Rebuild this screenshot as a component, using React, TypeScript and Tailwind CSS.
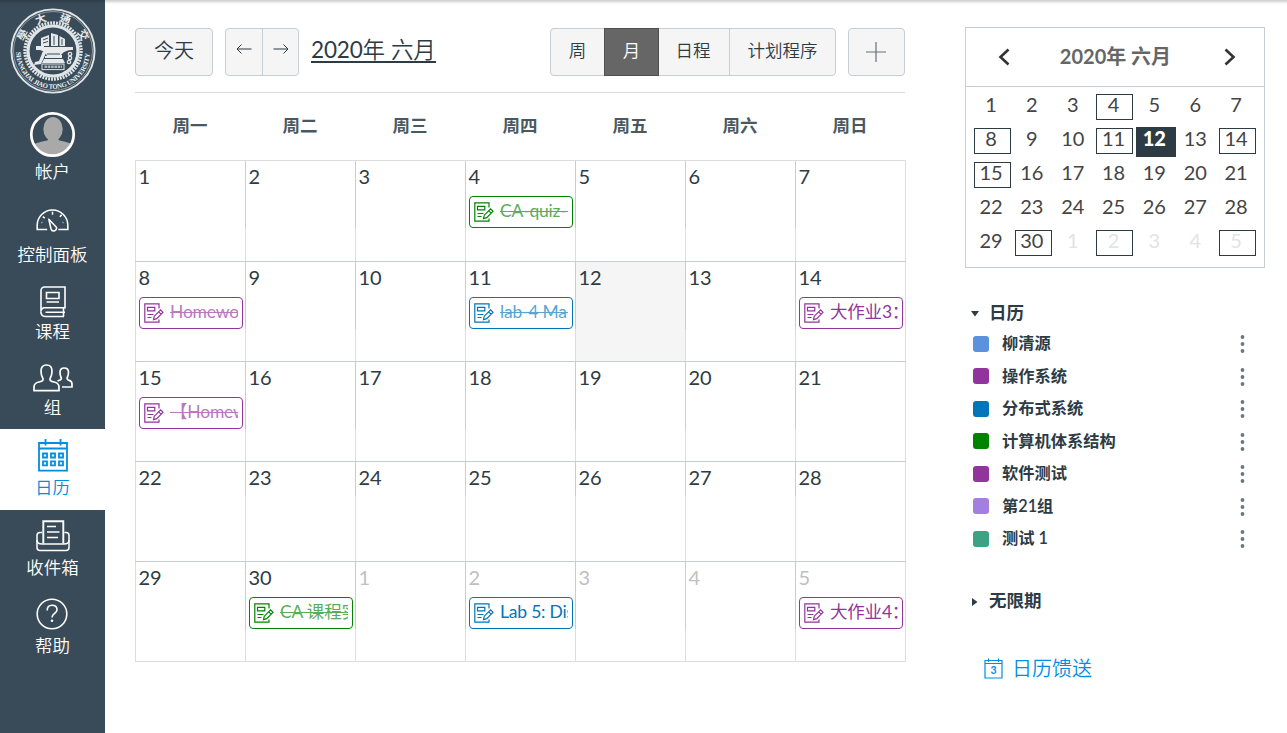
import React from 'react';

type EventItem = { title: string; tone: Tone; done?: boolean };
type Day = { n: number; other?: boolean; today?: boolean; event?: EventItem };
type Tone = 'purple' | 'blue' | 'green';

const toneClass: Record<Tone, string> = {
  purple: 'border-[#91349b] text-[#91349b]',
  blue: 'border-[#0076b8] text-[#0076b8]',
  green: 'border-[#008400] text-[#008400]',
};

const events: Record<number, EventItem> = {
  3: { title: 'CA-quiz-1', tone: 'green', done: true },
  7: { title: 'Homework', tone: 'purple', done: true },
  10: { title: 'lab-4 Map', tone: 'blue', done: true },
  13: { title: '大作业3：', tone: 'purple' },
  14: { title: '【Homework', tone: 'purple', done: true },
  29: { title: 'CA 课程实验', tone: 'green', done: true },
  31: { title: 'Lab 5: Dist', tone: 'blue' },
  34: { title: '大作业4：', tone: 'purple' },
};

const weeks: Day[][] = [0, 1, 2, 3, 4].map((w) =>
  [0, 1, 2, 3, 4, 5, 6].map((d) => {
    const i = w * 7 + d;
    return { n: i < 30 ? i + 1 : i - 29, other: i >= 30, today: i === 11, event: events[i] };
  }),
);

const weekdays = ['周一', '周二', '周三', '周四', '周五', '周六', '周日'];

const calendars = [
  { name: '柳清源', color: 'bg-[#5b92de]' },
  { name: '操作系统', color: 'bg-[#91349b]' },
  { name: '分布式系统', color: 'bg-[#0076b8]' },
  { name: '计算机体系结构', color: 'bg-[#008400]' },
  { name: '软件测试', color: 'bg-[#91349b]' },
  { name: '第21组', color: 'bg-[#a37fdf]' },
  { name: '测试 1', color: 'bg-[#3da284]' },
];

function Seal() {
  return (
    <svg width="86" height="86" viewBox="-43 -43 86 86" fill="none" stroke="#dfe4e7">
      <defs>
        <path id="seal-bottom" d="M-36.800 1A36.800 36.800 0 0 0 36.800 1" />
      </defs>
      <circle r="41.600" strokeWidth="1.900" />
      <circle r="39.500" strokeWidth="1" opacity="0.5" />
      <circle r="28" strokeWidth="3.400" strokeDasharray="1.900 1.030" />
      <circle r="25" strokeWidth="3.200" />
      <text fill="#eef1f2" stroke="none" fontSize="6.800" fontWeight="700" fontFamily="'Liberation Serif', serif">
        <textPath href="#seal-bottom" startOffset="0" textLength="114" lengthAdjust="spacing">SHANGHAI JIAO TONG UNIVERSITY</textPath>
      </text>
      <g fill="#e6eaec" stroke="none" fontSize="11" fontWeight="700" fontFamily="'Noto Sans CJK TC', sans-serif" textAnchor="middle">
        <text transform="rotate(-62) translate(0 -30.300)">學</text>
        <text transform="rotate(-21) translate(0 -30.300)">大</text>
        <text transform="rotate(21) translate(0 -30.300)">通</text>
        <text transform="rotate(62) translate(0 -30.300)">交</text>
      </g>
      <g fill="#e6eaec" stroke="none">
        <path d="M-17-5H-9V-4H20V-1C14-1 10 1 8 4H9V8H-8V5H-6C-7 2-9 0-13 -1H-17Z" />
        <path d="M-12-5V-13L-4-16V-5Z" />
        <path d="M-2-5V-18L5-16V-5Z" />
        <path d="M6.500-5V-15L12-12V-5Z" />
        <path d="M-10 0L-7 2L-12 13L-19 14L-18 11L-14 10Z" />
        <path d="M-9 8H10L12 12H-11Z" />
      </g>
      <path d="M-10-11L-5-13M-10-8L-5-9.500M1-15V-6M9-12V-6M-6 3H7M-8 7.500H9" stroke="#394b58" strokeWidth="1" />
      <g strokeWidth="1.300">
        <circle cx="17" cy="3" r="1.700" />
        <circle cx="17" cy="7" r="1.700" />
        <circle cx="16" cy="11" r="1.700" />
      </g>
      <rect x="-11" y="13" width="22" height="5.600" strokeWidth="1" />
      <path d="M-8.500 15.800H9" strokeWidth="2.600" strokeDasharray="2.600 0.700" opacity="0.7" />
    </svg>
  );
}

function Avatar() {
  return (
    <svg width="46" height="46" viewBox="0 0 46 46">
      <defs>
        <clipPath id="avatar-clip">
          <circle cx="22.500" cy="23.500" r="20.500" />
        </clipPath>
      </defs>
      <g clipPath="url(#avatar-clip)" fill="#a9a9a9">
        <ellipse cx="23" cy="18" rx="9.700" ry="12" />
        <path d="M18 26H28.500V29C34 31 42 31 43 36V46H2V36C4 31 13 31 18 29Z" />
      </g>
      <circle cx="22.500" cy="23.500" r="21.200" fill="none" stroke="#fff" strokeWidth="2.700" />
    </svg>
  );
}

function GaugeIcon() {
  return (
    <svg width="33" height="24" viewBox="0 0 34 24" fill="none" stroke="#fff" strokeWidth="1.600" className="-ml-px">
      <path d="M11.500 21.700H1.200V17.500A15.800 15.800 0 0 1 32.800 17.500V21.700H23" />
      <path d="M17 3.500V6.500M26.500 6.700L24.500 8.700M9 10L7 8.500M5.800 14.500L6.500 14.700M28.200 14.500L27.500 14.700" />
      <path d="M13.200 11.200L21 19.500A2.600 2.600 0 0 1 15.500 21.300Z" strokeLinejoin="round" />
    </svg>
  );
}

function BookIcon() {
  return (
    <svg width="26" height="32" viewBox="0 0 26 32" fill="none" stroke="#fff" strokeWidth="1.600">
      <path d="M23 21.800H4.500A3.500 3.500 0 0 0 1 25.500V4.500A3.500 3.500 0 0 1 4.500 1H25V21.800H23" />
      <path d="M1 25.500A4.300 4.300 0 0 0 5 30.500H24M5.500 26.300H25M23.500 22V30.500" />
      <path d="M6.500 6.500H19V12.500H6.500ZM6.500 16H19" />
    </svg>
  );
}

function GroupIcon() {
  return (
    <svg width="40" height="28" viewBox="0 0 40 28" fill="none" stroke="#fff" strokeWidth="1.700" strokeLinejoin="round">
      <path d="M1 26.700V23C1 18.800 4 18.500 6.800 17.800C10 17 10.600 15.600 9.700 14C8.300 11.500 8 9.500 8 7C8 3 10 1 13.500 1S19 3 19 7C19 9.500 18.700 11.500 17.300 14C16.400 15.600 17 17 20.200 17.800C23 18.500 26 18.800 26 23V26.700Z" />
      <path d="M29 23H39V20C39 16.800 37 16.800 35.300 16C33.700 15.200 34 14 34.500 13C35.200 11.500 35.500 10.500 35.500 8.500C35.500 5.600 34 4 31.200 4S27 5.600 27 8.500C27 10.500 27.200 11.500 27.900 13C28.400 14 28.700 15.200 27 16L24.500 17" />
    </svg>
  );
}

function CalendarIcon() {
  return (
    <svg width="30" height="34" viewBox="0 0 30 34" fill="none" stroke="#008ee2" strokeWidth="1.800">
      <path d="M1 4H29V31.700H1ZM1 9.500H29" />
      <path d="M7.500 0V6.500M22.500 0V6.500" />
      <path d="M5 14.500H9V18.500H5ZM13 14.500H17V18.500H13ZM21 14.500H25V18.500H21ZM5 22.300H9V26.300H5ZM13 22.300H17V26.300H13ZM21 22.300H25V26.300H21Z" />
    </svg>
  );
}

function InboxIcon() {
  return (
    <svg width="34" height="32" viewBox="0 0 34 32" fill="none" stroke="#fff" strokeWidth="1.500">
      <path d="M7.300 23.500V1.200H27.300V23.500" strokeWidth="1.900" />
      <path d="M11 6.500H20M11 12H23.500M11 17.500H22" />
      <path d="M6 12.500H4A3 3 0 0 0 1 15.500V27.500A3 3 0 0 0 4 30.500H30A3 3 0 0 0 33 27.500V15.500A3 3 0 0 0 30 12.500H28.500" />
      <path d="M1 20C1 23 3 24 6 24H28C31 24 33 23 33 20" />
    </svg>
  );
}

function HelpIcon() {
  return (
    <svg width="32" height="32" viewBox="0 0 32 32" fill="none" stroke="#fff" strokeWidth="1.600" className="-ml-[2px]">
      <circle cx="16" cy="16" r="14.800" />
      <path d="M11.200 12.500C11.200 9 13 7.300 16 7.300S21 9 21 11.800C21 15.500 16 15.500 16 19.500" />
      <circle cx="16" cy="22.800" r="1.300" fill="#fff" stroke="none" />
    </svg>
  );
}

function AssignmentIcon() {
  return (
    <svg width="20" height="20" viewBox="0 0 20 20" fill="none" stroke="currentColor" strokeWidth="1.200" className="shrink-0">
      <path d="M15 5.500V0.800H0.800V19.200H15V16.500" />
      <path d="M3.500 4.300H10.800V7.800H3.500ZM3.500 11.500H9.500M3.500 14.500H7.500" />
      <path d="M9.500 16.600L10.300 13.200L16.600 6.900L19 9.300L12.700 15.700ZM14.700 8.800L17.100 11.200" />
    </svg>
  );
}

function NavItem({ label, box, active, children }: { label: string; box: string; active?: boolean; children: React.ReactNode }) {
  return (
    <a className={`flex flex-col items-center justify-between ${box} ${active ? 'bg-white text-[#008ee2]' : 'text-white'}`}>
      {children}
      <span className="block h-6 pt-px text-[17.5px] leading-6 whitespace-nowrap">{label}</span>
    </a>
  );
}

function Sidebar() {
  return (
    <nav className="flex h-[733px] w-[105px] shrink-0 flex-col bg-[#394b58] font-[350]">
      <div className="flex h-[111px] justify-center pt-2">
        <Seal />
      </div>
      <NavItem label="帐户" box="h-[72px]"><Avatar /></NavItem>
      <NavItem label="控制面板" box="mt-[25px] h-[58px]"><GaugeIcon /></NavItem>
      <NavItem label="课程" box="mt-[20px] h-[57px]"><BookIcon /></NavItem>
      <NavItem label="组" box="mt-[21px] h-[55px]"><GroupIcon /></NavItem>
      <NavItem label="日历" box="mt-[10px] h-[81px] pt-[10px] pb-[11px]" active><CalendarIcon /></NavItem>
      <NavItem label="收件箱" box="mt-[10px] h-[59px]"><InboxIcon /></NavItem>
      <NavItem label="帮助" box="mt-[19px] h-[59px]"><HelpIcon /></NavItem>
    </nav>
  );
}

function Toolbar() {
  return (
    <div className="flex h-[65px] items-start border-b border-[#d9dcde] font-[350] text-[#2d3b45]">
      <button className="h-12 w-[78px] rounded border border-[#c7cdd1] bg-[#f5f5f5] pb-1 text-xl leading-6">今天</button>
      <div className="ml-3 flex h-12 w-[74px] rounded border border-[#c7cdd1] bg-[#f5f5f5]">
        <button className="flex w-[37px] justify-center border-r border-[#c7cdd1] pt-[12.5px]">
          <svg width="16" height="14" viewBox="0 0 16 14" fill="none" stroke="#2d3b45" strokeWidth="1"><path d="M15.500 7H1M5.500 2.500L1 7L5.500 11.500" /></svg>
        </button>
        <button className="flex flex-1 justify-center pt-[12.500px]">
          <svg width="16" height="14" viewBox="0 0 16 14" fill="none" stroke="#2d3b45" strokeWidth="1"><path d="M0.500 7H15M10.500 2.500L15 7L10.500 11.500" /></svg>
        </button>
      </div>
      <h1 className="mt-[10px] ml-3 h-[25px] border-b-2 border-[#2d3b45] text-[22.5px] leading-[24px] tracking-[-0.15px] whitespace-nowrap"><span className="font-normal">2020</span>年 六月</h1>
      <div className="ml-auto flex h-12 rounded border border-[#c7cdd1] bg-[#f5f5f5] text-[17.5px]">
        <button className="w-[53px] pb-[2px]">周</button>
        <button className="-my-px w-[55px] border border-[#4f4f4f] bg-[#666] pb-[2px] text-white">月</button>
        <button className="w-[71px] border-r border-[#c7cdd1] pr-[2px] pb-[2px]">日程</button>
        <button className="w-[105px] pb-[2px]">计划程序</button>
      </div>
      <button className="ml-3 flex h-12 w-[57px] items-center justify-center rounded border border-[#c7cdd1] bg-[#f5f5f5]">
        <svg width="22" height="22" viewBox="0 0 22 22" stroke="#667079" strokeWidth="1.200" className="-ml-px -mt-px"><path d="M11 1V21M1 11H21" /></svg>
      </button>
    </div>
  );
}

function EventChip({ event }: { event: EventItem }) {
  return (
    <div className={`mt-[8px] flex h-8 w-[104px] items-center rounded border bg-white pr-1 pl-1 ${toneClass[event.tone]}`}>
      <AssignmentIcon />
      <div className={`ml-[6px] h-7 min-w-0 flex-1 overflow-hidden text-[17.5px] leading-[26px] tracking-[-0.2px] whitespace-nowrap ${event.done ? 'line-through decoration-1 opacity-65' : ''}`}>
        {event.title}
      </div>
    </div>
  );
}

function MonthGrid() {
  return (
    <div className="w-[771px] border-b border-[#ddd]">
      {weeks.map((week, w) => (
        <div key={w} className={`flex border-t ${w === 0 ? 'h-[101px] border-[#ddd]' : 'h-[100px] border-[#c7cdd1]'}`}>
          {week.map((day, d) => (
            <div key={d} className={`flex flex-col ${d === 6 ? 'w-[111px] border-r border-[#ddd]' : 'w-[110px]'} ${day.today ? 'bg-[#f5f5f5]' : ''}`}>
              <div className={`border-l pl-[3px] ${w === 3 ? 'h-[34px]' : 'h-[67px]'} ${d === 0 ? 'border-[#ddd]' : 'border-[#c7cdd1]'}`}>
                <div className={`-ml-[0.5px] pt-[3px] text-xl leading-6 tracking-[-0.1px] ${day.other ? 'text-[#c0c0c0]' : 'text-[#2d3b45]'}`}>{day.n}</div>
                {day.event && <EventChip event={day.event} />}
              </div>
              <div className="flex-1 border-l border-[#ddd]" />
            </div>
          ))}
        </div>
      ))}
    </div>
  );
}

function MiniDay({ day }: { day: Day }) {
  if (day.today) {
    return (
      <div className="flex h-[34px] justify-center pt-[3px]">
        <span className="h-[30px] w-10 bg-[#2d3b45] pr-[3px] text-center leading-[23px] font-black text-white">{day.n}</span>
      </div>
    );
  }
  return (
    <div className={`flex h-[34px] justify-center pt-1 ${day.other ? 'text-[#e3e3e3]' : 'text-[#444]'}`}>
      <span className={`h-[26px] w-[37px] border pr-[3px] text-center leading-[19px] tracking-[-0.1px] ${day.event ? 'border-[#2d3b45]' : 'border-transparent'}`}>{day.n}</span>
    </div>
  );
}

function MiniCalendar() {
  return (
    <section className="h-[241px] w-[300px] border border-[#c7cdd1]">
      <header className="flex h-[59px] items-center justify-between border-b border-[#c7cdd1] px-8">
        <svg width="12" height="18" viewBox="0 0 12 18" fill="none" stroke="#333" strokeWidth="2.600"><path d="M10.500 1.500L2.500 9L10.500 16.500" /></svg>
        <h2 className="-mt-[2px] -ml-[3px] text-xl leading-6 font-bold text-[#666]">2020年 六月</h2>
        <svg width="12" height="18" viewBox="0 0 12 18" fill="none" stroke="#333" strokeWidth="2.600" className="mr-[-4px]"><path d="M1.500 1.500L9.500 9L1.500 16.500" /></svg>
      </header>
      <div className="ml-[6px] grid w-[286px] grid-cols-7 pt-[3px] text-xl">
        {weeks.flat().map((day, i) => <MiniDay key={i} day={day} />)}
      </div>
    </section>
  );
}

function SidePanel() {
  return (
    <aside className="ml-[59px] flex w-[300px] flex-col pt-[27px] text-[#2d3b45]">
      <MiniCalendar />
      <div className="mt-8 flex h-[26px] items-center pl-[6px] text-[17.5px] font-bold">
        <svg width="8" height="6" viewBox="0 0 8 6" fill="#2d3b45" className="mt-[2px]"><path d="M0 0H8L4 5.500Z" /></svg>
        <h2 className="ml-[10px] leading-6">日历</h2>
      </div>
      <ul className="mt-[1px]">
        {calendars.map((c) => (
          <li key={c.name} className="flex h-[32.5px] items-center pr-5 pl-2">
            <span className={`mt-px size-4 rounded-[3px] ${c.color}`} />
            <span className="ml-[13px] flex-1 text-[16.25px] leading-6 font-semibold">{c.name}</span>
            <svg width="5" height="20" viewBox="0 0 5 20" fill="#6b7780" className="mt-[2px]"><circle cx="2.500" cy="3" r="1.900" /><circle cx="2.500" cy="10" r="1.900" /><circle cx="2.500" cy="17" r="1.900" /></svg>
          </li>
        ))}
      </ul>
      <div className="mt-[33px] flex h-[26px] items-center pl-[7px] text-[17.5px] font-bold">
        <svg width="6" height="8" viewBox="0 0 6 8" fill="#2d3b45" className="mt-[2px]"><path d="M0 0V8L5.500 4Z" /></svg>
        <h2 className="ml-[11px] leading-6">无限期</h2>
      </div>
      <a className="mt-[41px] flex items-center pl-[19px] text-xl leading-[26px] font-[350] text-[#008ee2]">
        <svg width="19" height="21" viewBox="0 0 19 21" fill="none" stroke="#008ee2" strokeWidth="1.200" className="mt-[2px]">
          <path d="M1 2.500H18V20H1ZM1 5.500H18M4.500 0.500V4M14.500 0.500V4" />
          <text x="9.500" y="16" textAnchor="middle" fill="#008ee2" stroke="none" fontSize="10.500" fontWeight="700">3</text>
        </svg>
        <span className="ml-[9px]">日历馈送</span>
      </a>
    </aside>
  );
}

export default function App() {
  return (
    <div className="relative flex h-[733px] w-[1287px] overflow-hidden bg-white font-[Lato,'Noto_Sans_CJK_SC',sans-serif]">
      <Sidebar />
      <main className="ml-[30px] w-[771px] pt-7">
        <div className="w-[770px]">
          <Toolbar />
          <div className="flex h-[67px] text-[17.5px] font-bold text-[#4a5860]">
            {weekdays.map((d) => (
              <div key={d} className="w-[110px] pt-[21px] text-center leading-6">{d}</div>
            ))}
          </div>
        </div>
        <MonthGrid />
      </main>
      <SidePanel />
      <div className="pointer-events-none absolute inset-x-0 top-0 h-1 bg-linear-to-b from-black/20 to-transparent" />
    </div>
  );
}
